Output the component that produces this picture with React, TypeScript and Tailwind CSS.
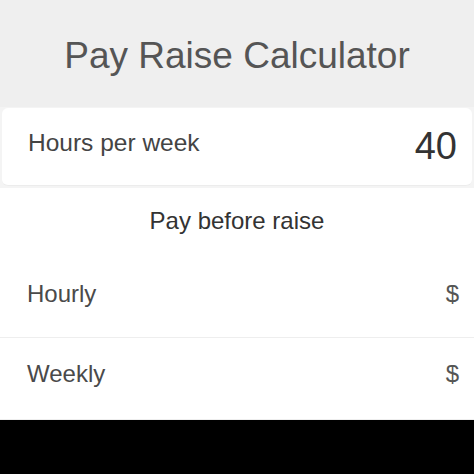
import React from "react";

const rows = [
  { label: "Hourly", unit: "$" },
  { label: "Weekly", unit: "$" },
];

const App = () => {
  return (
    <div className="w-[474px] h-[474px] overflow-hidden bg-black font-['Liberation_Sans',Arial,sans-serif]">
      <div className="h-[420px] bg-[#f4f4f4] flex flex-col">
        <div className="h-[107px] shrink-0 bg-[#efefef] flex items-center justify-center">
          <h1 className="text-[37px] text-[#555555] leading-none pt-[3px]">Pay Raise Calculator</h1>
        </div>

        <div className="mx-[2px] mt-[1px] h-[78px] shrink-0 bg-white rounded-[6px] border-b border-[#ececec] flex items-center justify-between pl-[26px] pr-[15px]">
          <span className="text-[24.5px] text-[#444444] mb-[6px]">Hours per week</span>
          <span className="text-[38px] text-[#333333]">40</span>
        </div>

        <div className="mt-[2px] flex-1 bg-white flex flex-col">
          <div className="h-[68px] flex items-center justify-center pb-[3px]">
            <p className="text-[24px] text-[#333333]">Pay before raise</p>
          </div>
          {rows.map((row, index) => (
            <div
              key={index}
              className={`h-[82px] border-b border-[#eeeeee] flex items-center justify-between pl-[27px] pr-[15px] ${index === 0 ? "pb-[6px]" : "pb-[9px]"}`}
            >
              <span className="text-[24px] text-[#4a4a4a]">{row.label}</span>
              <span className="text-[24px] text-[#555555]">{row.unit}</span>
            </div>
          ))}
        </div>
      </div>
    </div>
  );
};
export default App;
